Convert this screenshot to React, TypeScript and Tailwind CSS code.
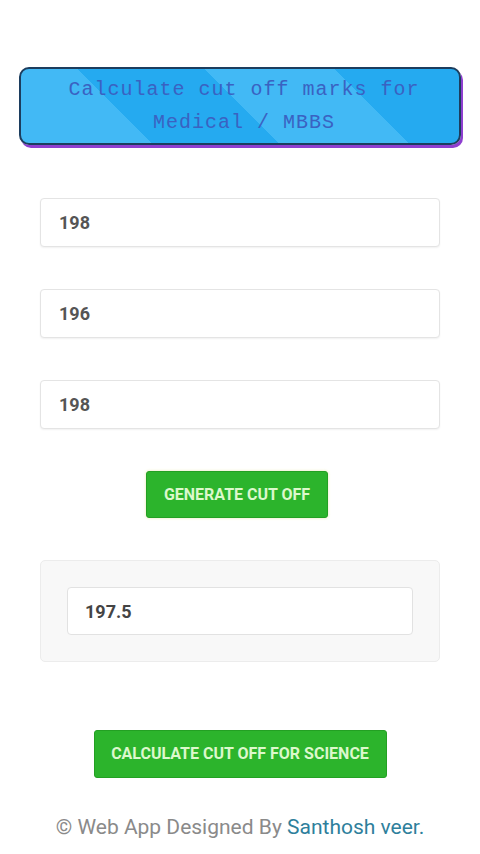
export default function App() {
  return (
    <div className="min-h-[854px] w-[480px] bg-white font-['Roboto',sans-serif]">
      <div className="pt-[67px] px-[19px]">
        <div className="rounded-[10px] border-2 border-[#1c3d5e] shadow-[2px_3px_0_#8e3fd0] bg-[repeating-linear-gradient(45deg,#42b9f5_0px,#42b9f5_92px,#25aaf0_92px,#25aaf0_182px)] py-[4px] pl-[8px] text-center font-['Liberation_Mono','Courier_New',monospace] text-[20px] leading-[33px] tracking-[1px] text-[#3a62c2]">
          <div>Calculate cut off marks for</div>
          <div>Medical / MBBS</div>
        </div>
      </div>

      <div className="mt-[53px] px-[40px] flex flex-col gap-[42px]">
        {["198", "196", "198"].map((v, i) => (
          <div
            key={i}
            className="h-[49px] rounded-[4px] border border-[#e4e4e4] shadow-[0_1px_2px_rgba(0,0,0,0.06)] bg-white flex items-center px-[18px] text-[18px] font-bold text-[#555]"
          >
            {v}
          </div>
        ))}
      </div>

      <div className="mt-[42px] flex justify-center pr-[6px]">
        <button className="h-[47px] w-[182px] rounded-[3px] bg-[#2cb42c] border border-[#23a023] shadow-[0_0_3px_rgba(220,220,120,0.6)] text-[16px] font-bold text-[#dcf8cc] uppercase">
          Generate cut off
        </button>
      </div>

      <div className="mt-[42px] mx-[40px] h-[102px] rounded-[5px] border border-[#ececec] bg-[#f8f8f8] px-[26px] flex items-center">
        <div className="h-[48px] w-full rounded-[4px] border border-[#e2e2e2] bg-white flex items-center px-[17px] text-[18px] font-bold text-[#444]">
          197.5
        </div>
      </div>

      <div className="mt-[68px] flex justify-center">
        <button className="h-[48px] w-[293px] rounded-[3px] bg-[#2cb42c] border border-[#23a023] text-[16px] font-bold text-[#dcf8cc] uppercase">
          Calculate cut off for science
        </button>
      </div>

      <div className="mt-[34px] text-center text-[21px] text-[#8a8a8a]">
        © Web App Designed By <span className="text-[#2e7f9c]">Santhosh veer.</span>
      </div>
    </div>
  );
}
